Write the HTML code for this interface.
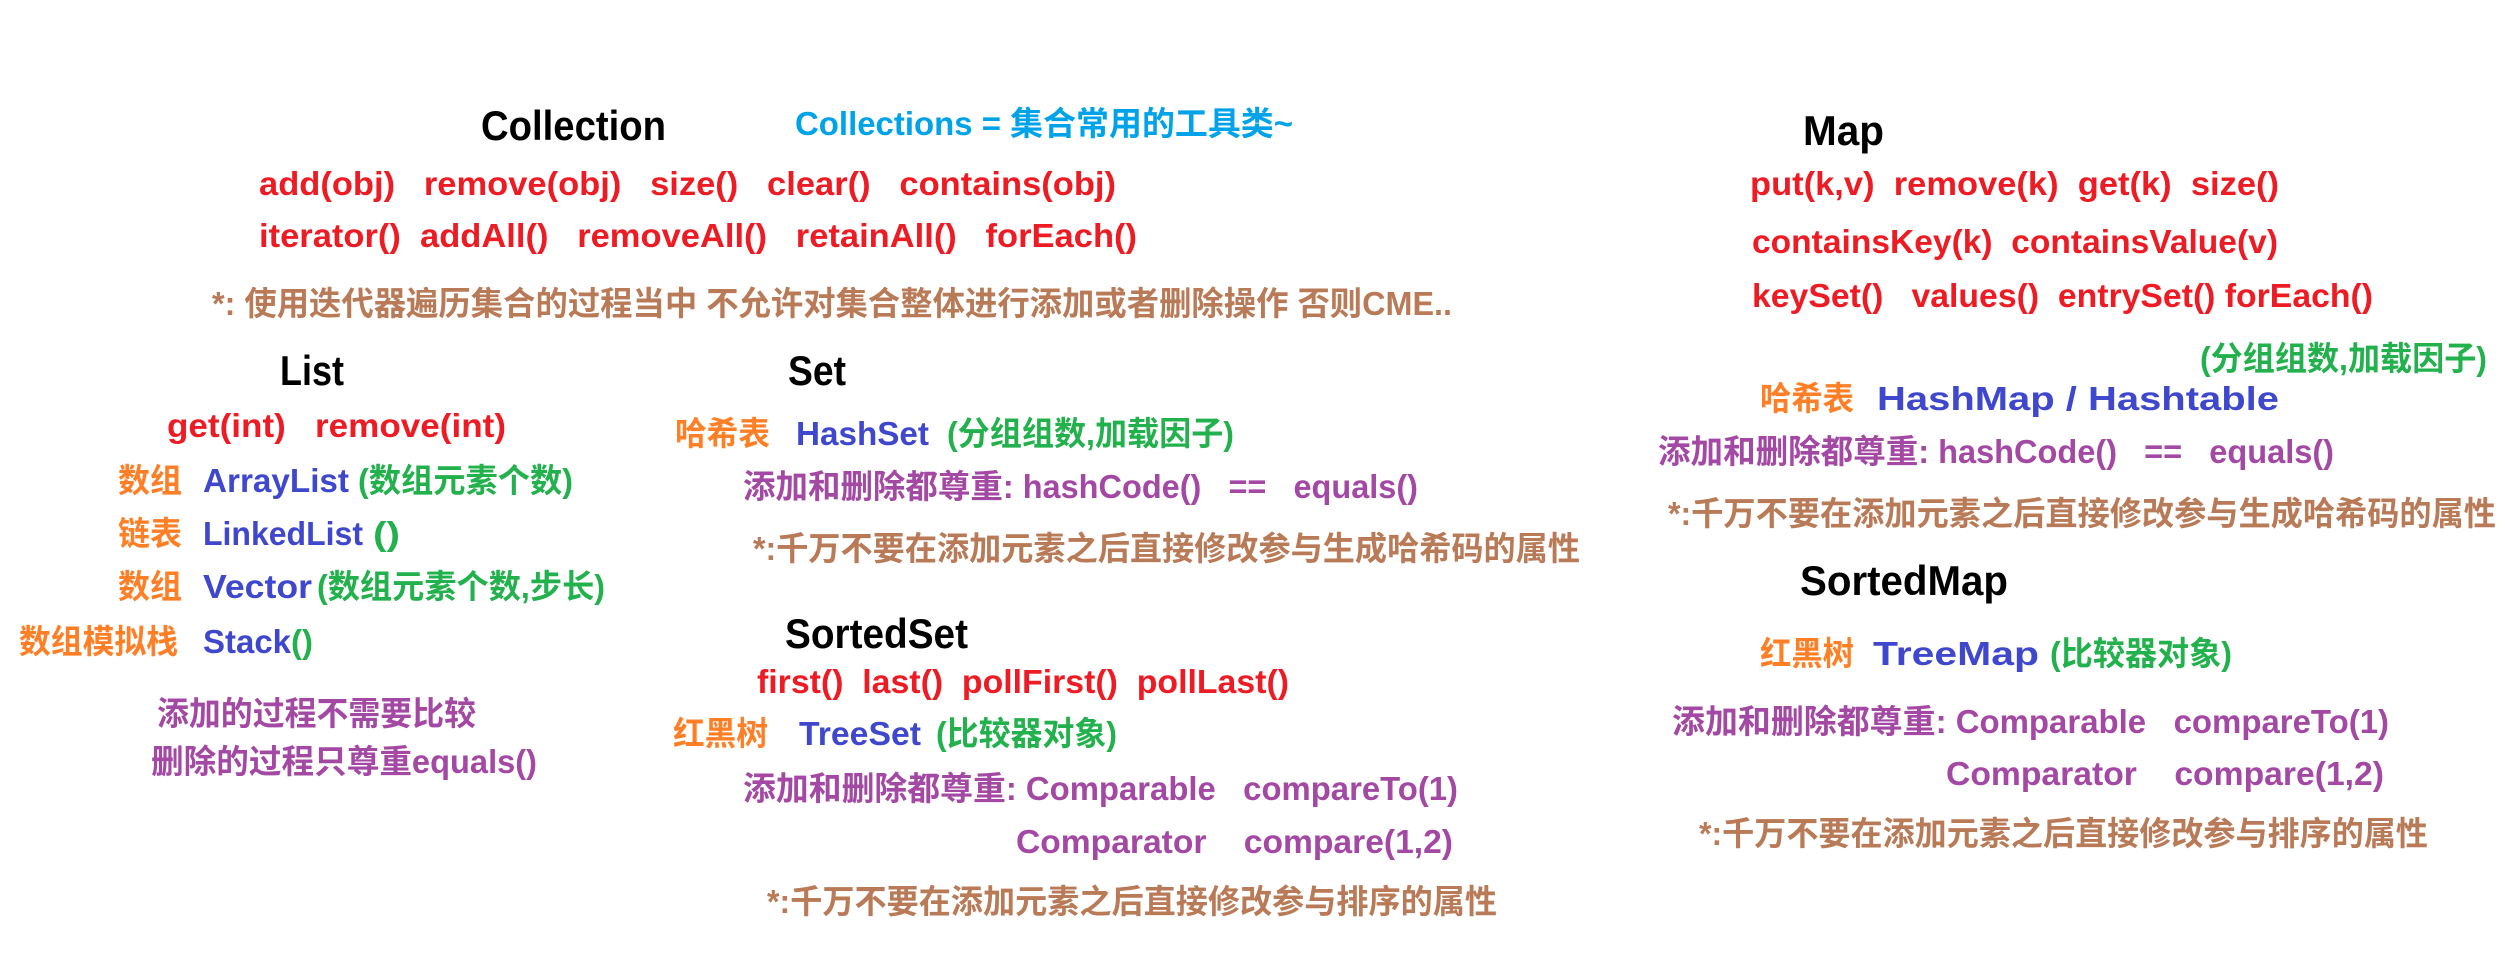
<!DOCTYPE html>
<html><head><meta charset="utf-8"><style>
html,body{margin:0;padding:0;background:#fff;width:2505px;height:973px;overflow:hidden}
svg{display:block}
text{font-family:"Liberation Sans","Noto Sans CJK SC",sans-serif;font-weight:bold;font-size:33px;white-space:pre}
.h{font-size:42px;fill:#000}
.r{fill:#ed1c24}.c{fill:#00a2e8}.o{fill:#ff7f27}.b{fill:#3f48cc}.g{fill:#22b14c}.p{fill:#a349a4}.n{fill:#b97a57}
</style></head><body>
<svg width="2505" height="973" viewBox="0 0 2505 973" xmlns="http://www.w3.org/2000/svg" xml:space="preserve">
<text class="h" x="481" y="140" textLength="185" lengthAdjust="spacingAndGlyphs">Collection</text>
<text class="c" x="795" y="135" font-size="34" textLength="498" lengthAdjust="spacingAndGlyphs">Collections = 集合常用的工具类~</text>
<text class="r" x="259" y="195" textLength="857" lengthAdjust="spacingAndGlyphs">add(obj)   remove(obj)   size()   clear()   contains(obj)</text>
<text class="r" x="259" y="247" textLength="878" lengthAdjust="spacingAndGlyphs">iterator()  addAll()   removeAll()   retainAll()   forEach()</text>
<text class="n" x="212" y="315" textLength="1240" lengthAdjust="spacingAndGlyphs">*: 使用迭代器遍历集合的过程当中 不允许对集合整体进行添加或者删除操作 否则CME..</text>

<text class="h" x="280" y="385" textLength="64" lengthAdjust="spacingAndGlyphs">List</text>
<text class="h" x="788" y="385" textLength="58" lengthAdjust="spacingAndGlyphs">Set</text>
<text class="r" x="167" y="437" textLength="339" lengthAdjust="spacingAndGlyphs">get(int)   remove(int)</text>
<text class="o" x="675" y="445" textLength="95" lengthAdjust="spacingAndGlyphs">哈希表</text>
<text class="b" x="796" y="445" textLength="133" lengthAdjust="spacingAndGlyphs">HashSet</text>
<text class="g" x="947" y="445" textLength="287" lengthAdjust="spacingAndGlyphs">(分组组数,加载因子)</text>
<text class="o" x="118" y="492" textLength="64" lengthAdjust="spacingAndGlyphs">数组</text>
<text class="b" x="203" y="492" textLength="146" lengthAdjust="spacingAndGlyphs">ArrayList</text>
<text class="g" x="358" y="492" textLength="215" lengthAdjust="spacingAndGlyphs">(数组元素个数)</text>
<text class="p" x="743" y="498" textLength="675" lengthAdjust="spacingAndGlyphs">添加和删除都尊重: hashCode()   ==   equals()</text>
<text class="o" x="118" y="545" textLength="64" lengthAdjust="spacingAndGlyphs">链表</text>
<text class="b" x="203" y="545" textLength="160" lengthAdjust="spacingAndGlyphs">LinkedList</text>
<text class="g" x="373" y="545" textLength="27" lengthAdjust="spacingAndGlyphs">()</text>
<text class="n" x="753" y="560" textLength="827" lengthAdjust="spacingAndGlyphs">*:千万不要在添加元素之后直接修改参与生成哈希码的属性</text>
<text class="o" x="118" y="598" textLength="64" lengthAdjust="spacingAndGlyphs">数组</text>
<text class="b" x="203" y="598" textLength="109" lengthAdjust="spacingAndGlyphs">Vector</text>
<text class="g" x="317" y="598" textLength="288" lengthAdjust="spacingAndGlyphs">(数组元素个数,步长)</text>

<text class="o" x="19" y="653" textLength="159" lengthAdjust="spacingAndGlyphs">数组模拟栈</text>
<text class="b" x="203" y="653" textLength="88" lengthAdjust="spacingAndGlyphs">Stack</text>
<text class="g" x="291" y="653" textLength="22" lengthAdjust="spacingAndGlyphs">()</text>
<text class="h" x="785" y="648" textLength="183" lengthAdjust="spacingAndGlyphs">SortedSet</text>
<text class="r" x="757" y="693" textLength="532" lengthAdjust="spacingAndGlyphs">first()  last()  pollFirst()  pollLast()</text>
<text class="p" x="157" y="725" textLength="319" lengthAdjust="spacingAndGlyphs">添加的过程不需要比较</text>
<text class="o" x="673" y="745" textLength="95" lengthAdjust="spacingAndGlyphs">红黑树</text>
<text class="b" x="799" y="745" textLength="122" lengthAdjust="spacingAndGlyphs">TreeSet</text>
<text class="g" x="936" y="745" textLength="181" lengthAdjust="spacingAndGlyphs">(比较器对象)</text>
<text class="p" x="151" y="773" textLength="386" lengthAdjust="spacingAndGlyphs">删除的过程只尊重equals()</text>
<text class="p" x="743" y="800" textLength="715" lengthAdjust="spacingAndGlyphs">添加和删除都尊重: Comparable   compareTo(1)</text>
<text class="p" x="1016" y="853" textLength="437" lengthAdjust="spacingAndGlyphs">Comparator    compare(1,2)</text>
<text class="n" x="767" y="913" textLength="730" lengthAdjust="spacingAndGlyphs">*:千万不要在添加元素之后直接修改参与排序的属性</text>

<text class="h" x="1803" y="145" textLength="81" lengthAdjust="spacingAndGlyphs">Map</text>
<text class="r" x="1750" y="195" textLength="529" lengthAdjust="spacingAndGlyphs">put(k,v)  remove(k)  get(k)  size()</text>
<text class="r" x="1752" y="253" textLength="526" lengthAdjust="spacingAndGlyphs">containsKey(k)  containsValue(v)</text>
<text class="r" x="1752" y="307" textLength="621" lengthAdjust="spacingAndGlyphs">keySet()   values()  entrySet() forEach()</text>
<text class="g" x="2200" y="370" textLength="287" lengthAdjust="spacingAndGlyphs">(分组组数,加载因子)</text>
<text class="o" x="1760" y="410" textLength="94" lengthAdjust="spacingAndGlyphs">哈希表</text>
<text class="b" x="1877" y="410" font-size="39" textLength="402" lengthAdjust="spacingAndGlyphs">HashMap / Hashtable</text>
<text class="p" x="1658" y="463" textLength="676" lengthAdjust="spacingAndGlyphs">添加和删除都尊重: hashCode()   ==   equals()</text>
<text class="n" x="1668" y="525" textLength="828" lengthAdjust="spacingAndGlyphs">*:千万不要在添加元素之后直接修改参与生成哈希码的属性</text>

<text class="h" x="1800" y="595" textLength="208" lengthAdjust="spacingAndGlyphs">SortedMap</text>
<text class="o" x="1760" y="665" textLength="94" lengthAdjust="spacingAndGlyphs">红黑树</text>
<text class="b" x="1873" y="665" font-size="39" textLength="166" lengthAdjust="spacingAndGlyphs">TreeMap</text>
<text class="g" x="2050" y="665" textLength="182" lengthAdjust="spacingAndGlyphs">(比较器对象)</text>
<text class="p" x="1672" y="733" textLength="717" lengthAdjust="spacingAndGlyphs">添加和删除都尊重: Comparable   compareTo(1)</text>
<text class="p" x="1946" y="785" textLength="438" lengthAdjust="spacingAndGlyphs">Comparator    compare(1,2)</text>
<text class="n" x="1699" y="845" textLength="729" lengthAdjust="spacingAndGlyphs">*:千万不要在添加元素之后直接修改参与排序的属性</text>
</svg>
</body></html>
